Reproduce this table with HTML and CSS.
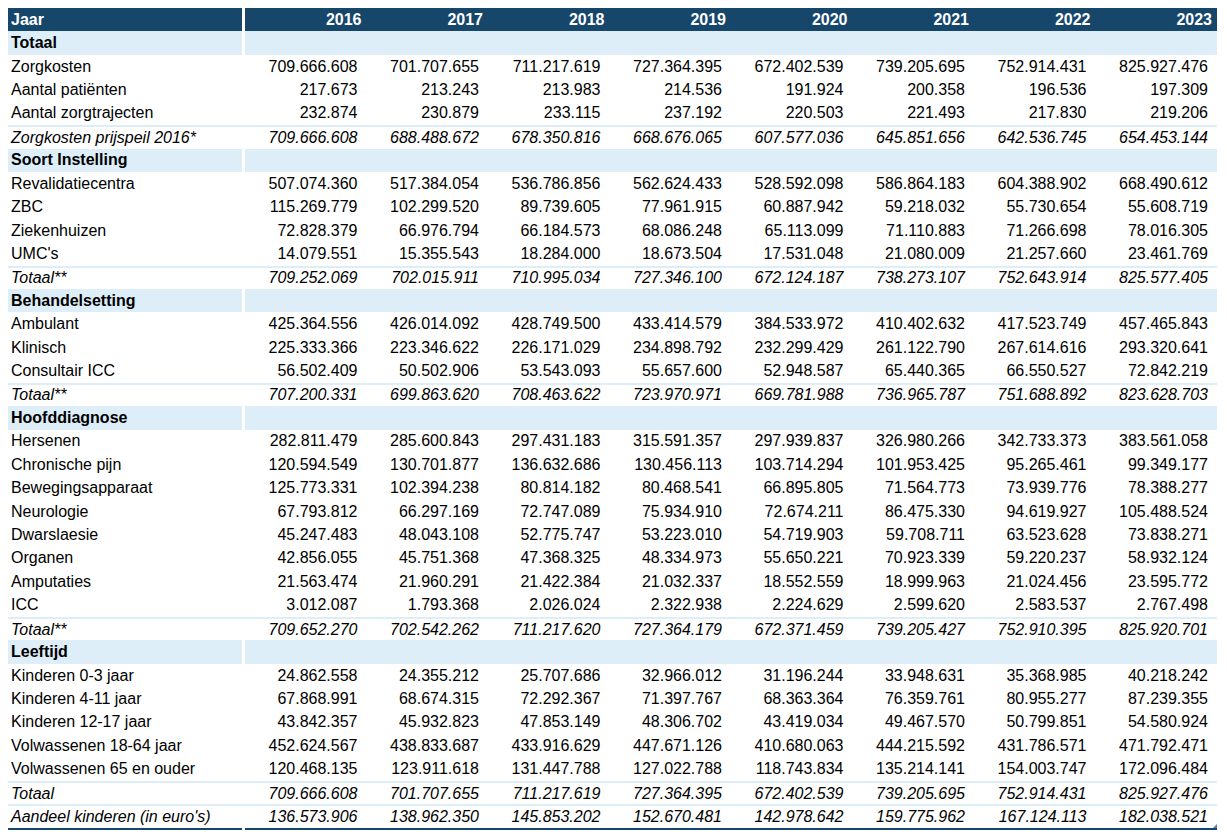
FILE: index.html
```html
<!DOCTYPE html>
<html lang="nl">
<head>
<meta charset="utf-8">
<title>Zorgkosten per jaar</title>
<link rel="stylesheet" href="styles.css">
</head>
<body>
<div class="tbl">
  <div class="row head"><span>Jaar</span><span>2016</span><span>2017</span><span>2018</span><span>2019</span><span>2020</span><span>2021</span><span>2022</span><span>2023</span></div>

  <div class="row sec"><span>Totaal</span><span class="fill"></span></div>
  <div class="row"><span>Zorgkosten</span><span>709.666.608</span><span>701.707.655</span><span>711.217.619</span><span>727.364.395</span><span>672.402.539</span><span>739.205.695</span><span>752.914.431</span><span>825.927.476</span></div>
  <div class="row"><span>Aantal patiënten</span><span>217.673</span><span>213.243</span><span>213.983</span><span>214.536</span><span>191.924</span><span>200.358</span><span>196.536</span><span>197.309</span></div>
  <div class="row"><span>Aantal zorgtrajecten</span><span>232.874</span><span>230.879</span><span>233.115</span><span>237.192</span><span>220.503</span><span>221.493</span><span>217.830</span><span>219.206</span></div>
  <div class="row tot"><span>Zorgkosten prijspeil 2016*</span><span>709.666.608</span><span>688.488.672</span><span>678.350.816</span><span>668.676.065</span><span>607.577.036</span><span>645.851.656</span><span>642.536.745</span><span>654.453.144</span></div>

  <div class="row sec"><span>Soort Instelling</span><span class="fill"></span></div>
  <div class="row"><span>Revalidatiecentra</span><span>507.074.360</span><span>517.384.054</span><span>536.786.856</span><span>562.624.433</span><span>528.592.098</span><span>586.864.183</span><span>604.388.902</span><span>668.490.612</span></div>
  <div class="row"><span>ZBC</span><span>115.269.779</span><span>102.299.520</span><span>89.739.605</span><span>77.961.915</span><span>60.887.942</span><span>59.218.032</span><span>55.730.654</span><span>55.608.719</span></div>
  <div class="row"><span>Ziekenhuizen</span><span>72.828.379</span><span>66.976.794</span><span>66.184.573</span><span>68.086.248</span><span>65.113.099</span><span>71.110.883</span><span>71.266.698</span><span>78.016.305</span></div>
  <div class="row"><span>UMC's</span><span>14.079.551</span><span>15.355.543</span><span>18.284.000</span><span>18.673.504</span><span>17.531.048</span><span>21.080.009</span><span>21.257.660</span><span>23.461.769</span></div>
  <div class="row tot"><span>Totaal**</span><span>709.252.069</span><span>702.015.911</span><span>710.995.034</span><span>727.346.100</span><span>672.124.187</span><span>738.273.107</span><span>752.643.914</span><span>825.577.405</span></div>

  <div class="row sec"><span>Behandelsetting</span><span class="fill"></span></div>
  <div class="row"><span>Ambulant</span><span>425.364.556</span><span>426.014.092</span><span>428.749.500</span><span>433.414.579</span><span>384.533.972</span><span>410.402.632</span><span>417.523.749</span><span>457.465.843</span></div>
  <div class="row"><span>Klinisch</span><span>225.333.366</span><span>223.346.622</span><span>226.171.029</span><span>234.898.792</span><span>232.299.429</span><span>261.122.790</span><span>267.614.616</span><span>293.320.641</span></div>
  <div class="row"><span>Consultair ICC</span><span>56.502.409</span><span>50.502.906</span><span>53.543.093</span><span>55.657.600</span><span>52.948.587</span><span>65.440.365</span><span>66.550.527</span><span>72.842.219</span></div>
  <div class="row tot"><span>Totaal**</span><span>707.200.331</span><span>699.863.620</span><span>708.463.622</span><span>723.970.971</span><span>669.781.988</span><span>736.965.787</span><span>751.688.892</span><span>823.628.703</span></div>

  <div class="row sec"><span>Hoofddiagnose</span><span class="fill"></span></div>
  <div class="row"><span>Hersenen</span><span>282.811.479</span><span>285.600.843</span><span>297.431.183</span><span>315.591.357</span><span>297.939.837</span><span>326.980.266</span><span>342.733.373</span><span>383.561.058</span></div>
  <div class="row"><span>Chronische pijn</span><span>120.594.549</span><span>130.701.877</span><span>136.632.686</span><span>130.456.113</span><span>103.714.294</span><span>101.953.425</span><span>95.265.461</span><span>99.349.177</span></div>
  <div class="row"><span>Bewegingsapparaat</span><span>125.773.331</span><span>102.394.238</span><span>80.814.182</span><span>80.468.541</span><span>66.895.805</span><span>71.564.773</span><span>73.939.776</span><span>78.388.277</span></div>
  <div class="row"><span>Neurologie</span><span>67.793.812</span><span>66.297.169</span><span>72.747.089</span><span>75.934.910</span><span>72.674.211</span><span>86.475.330</span><span>94.619.927</span><span>105.488.524</span></div>
  <div class="row"><span>Dwarslaesie</span><span>45.247.483</span><span>48.043.108</span><span>52.775.747</span><span>53.223.010</span><span>54.719.903</span><span>59.708.711</span><span>63.523.628</span><span>73.838.271</span></div>
  <div class="row"><span>Organen</span><span>42.856.055</span><span>45.751.368</span><span>47.368.325</span><span>48.334.973</span><span>55.650.221</span><span>70.923.339</span><span>59.220.237</span><span>58.932.124</span></div>
  <div class="row"><span>Amputaties</span><span>21.563.474</span><span>21.960.291</span><span>21.422.384</span><span>21.032.337</span><span>18.552.559</span><span>18.999.963</span><span>21.024.456</span><span>23.595.772</span></div>
  <div class="row"><span>ICC</span><span>3.012.087</span><span>1.793.368</span><span>2.026.024</span><span>2.322.938</span><span>2.224.629</span><span>2.599.620</span><span>2.583.537</span><span>2.767.498</span></div>
  <div class="row tot"><span>Totaal**</span><span>709.652.270</span><span>702.542.262</span><span>711.217.620</span><span>727.364.179</span><span>672.371.459</span><span>739.205.427</span><span>752.910.395</span><span>825.920.701</span></div>

  <div class="row sec"><span>Leeftijd</span><span class="fill"></span></div>
  <div class="row"><span>Kinderen 0-3 jaar</span><span>24.862.558</span><span>24.355.212</span><span>25.707.686</span><span>32.966.012</span><span>31.196.244</span><span>33.948.631</span><span>35.368.985</span><span>40.218.242</span></div>
  <div class="row"><span>Kinderen 4-11 jaar</span><span>67.868.991</span><span>68.674.315</span><span>72.292.367</span><span>71.397.767</span><span>68.363.364</span><span>76.359.761</span><span>80.955.277</span><span>87.239.355</span></div>
  <div class="row"><span>Kinderen 12-17 jaar</span><span>43.842.357</span><span>45.932.823</span><span>47.853.149</span><span>48.306.702</span><span>43.419.034</span><span>49.467.570</span><span>50.799.851</span><span>54.580.924</span></div>
  <div class="row"><span>Volwassenen 18-64 jaar</span><span>452.624.567</span><span>438.833.687</span><span>433.916.629</span><span>447.671.126</span><span>410.680.063</span><span>444.215.592</span><span>431.786.571</span><span>471.792.471</span></div>
  <div class="row"><span>Volwassenen 65 en ouder</span><span>120.468.135</span><span>123.911.618</span><span>131.447.788</span><span>127.022.788</span><span>118.743.834</span><span>135.214.141</span><span>154.003.747</span><span>172.096.484</span></div>
  <div class="row tot"><span>Totaal</span><span>709.666.608</span><span>701.707.655</span><span>711.217.619</span><span>727.364.395</span><span>672.402.539</span><span>739.205.695</span><span>752.914.431</span><span>825.927.476</span></div>
  <div class="row tot last"><span>Aandeel kinderen (in euro's)</span><span>136.573.906</span><span>138.962.350</span><span>145.853.202</span><span>152.670.481</span><span>142.978.642</span><span>159.775.962</span><span>167.124.113</span><span>182.038.521</span></div>
</div>
</body>
</html>
```

FILE: styles.css
```css
html, body {
  background: #ffffff;
}

body {
  margin: 8px;
  font-family: "Liberation Sans", Arial, sans-serif;
  font-size: 16px;
  color: #000000;
}

.tbl {
  width: 1209px;
  position: relative;
}

.row {
  display: grid;
  grid-template-columns: 237px repeat(8, 1fr);
  height: 23.43px;
  box-sizing: border-box;
}

.row > span {
  display: flex;
  align-items: center;
  justify-content: flex-end;
  padding-right: 9px;
  white-space: nowrap;
  overflow: hidden;
}

.row > span:first-child {
  justify-content: flex-start;
  padding-left: 3px;
  padding-right: 0;
}

/* header row */
.head > span {
  background: #17466b;
  color: #ffffff;
  font-weight: bold;
  padding-right: 5px;
}

.head > span:first-child,
.sec > span:first-child,
.last > span:first-child {
  margin-right: 3px;
}

/* section rows */
.sec > span {
  background: #ddeef8;
  font-weight: bold;
}

.sec > .fill {
  grid-column: 2 / -1;
}

/* total rows */
.tot {
  border-top: 2px solid #ddeef8;
  font-style: italic;
}

.last {
  height: 25.43px;
}

.last > span {
  border-bottom: 2px solid #17466b;
}

.tbl::after {
  content: "";
  position: absolute;
  right: 0;
  bottom: 2px;
  width: 0;
  height: 0;
  border-left: 4px solid transparent;
  border-bottom: 4px solid #5b7fb0;
}
```
